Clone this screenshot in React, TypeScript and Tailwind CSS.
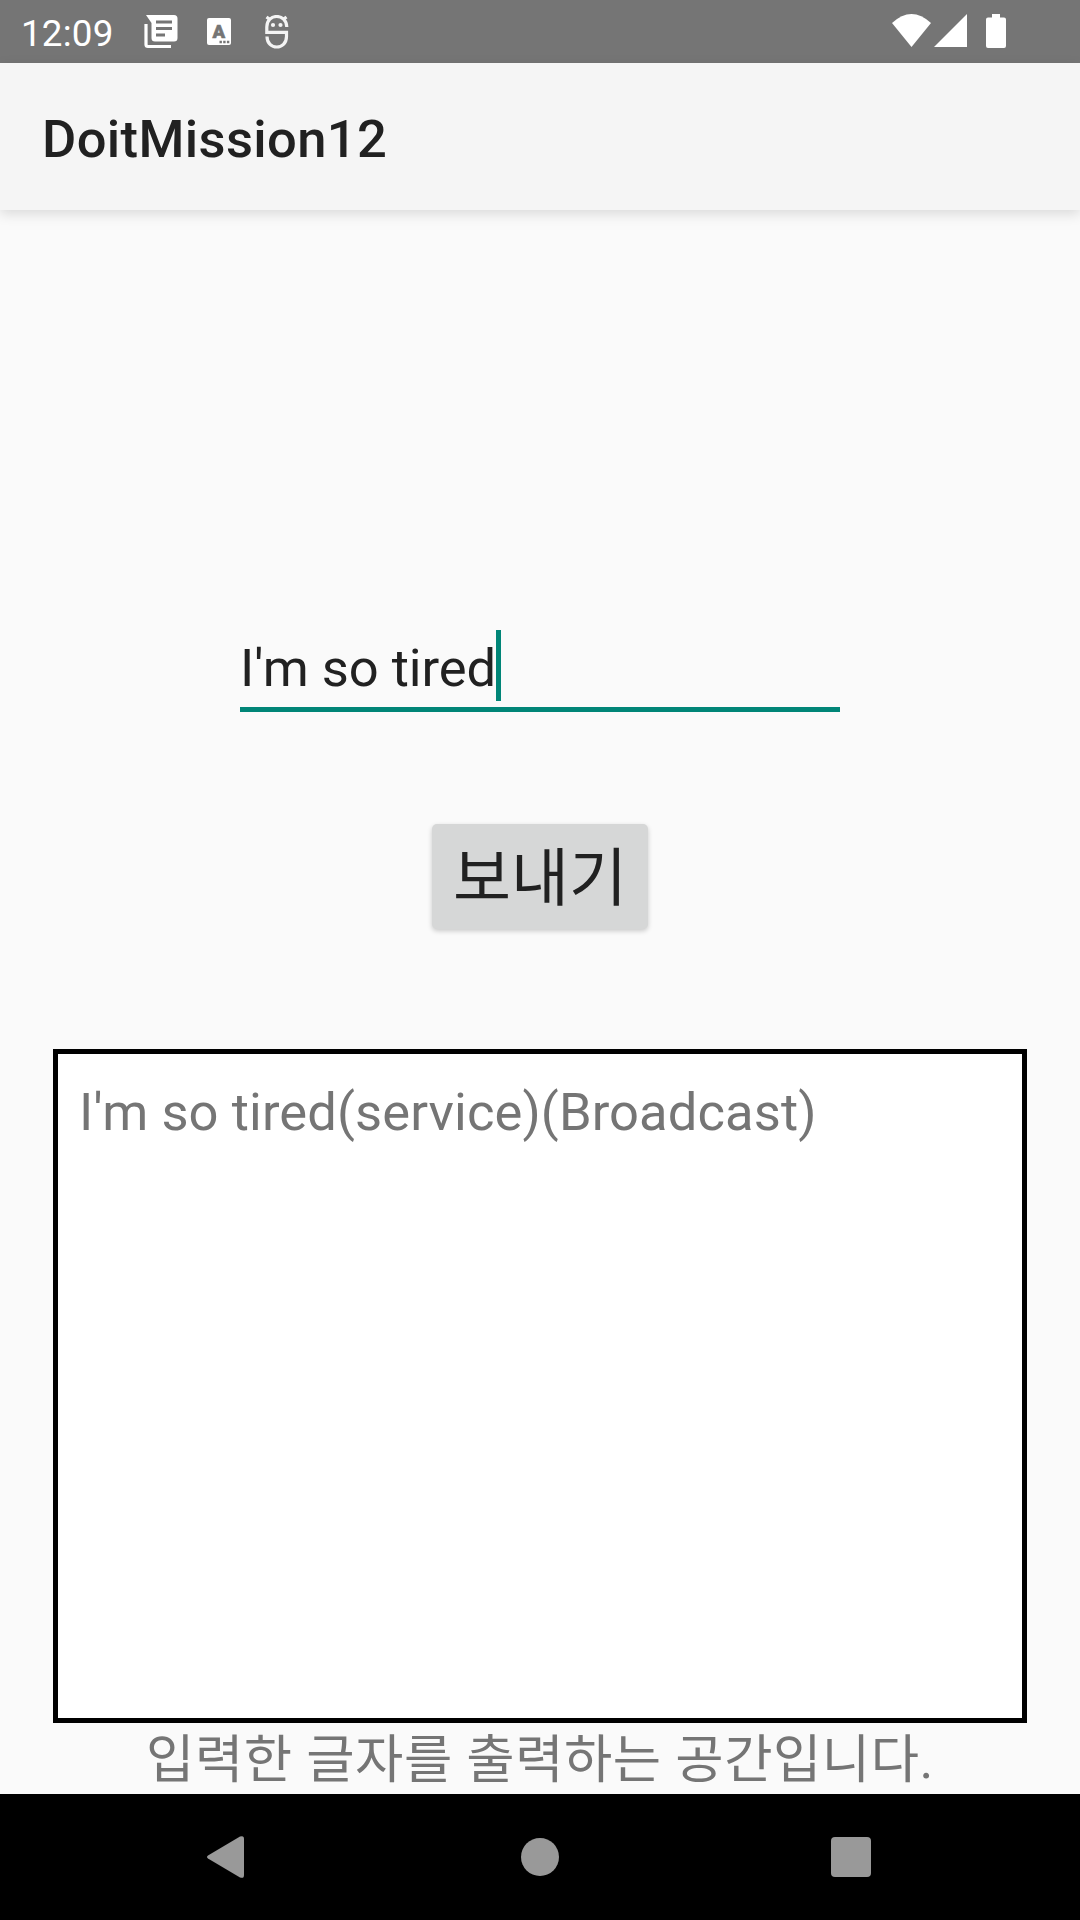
import { useState } from 'react';

function NewsIcon() {
  return (
    <svg width="34" height="34" viewBox="0 0 34 34" fill="none">
      <path d="M2 9V29.500Q2 31.500 4 31.500H27" stroke="#fff" strokeWidth="3.200" />
      <path
        d="M2 0H30Q33.500 0 33.500 3.500V23Q33.500 26.500 30 26.500H11Q7.500 26.500 7.500 23V8Z"
        fill="#fff"
      />
      <path d="M12 7H28M12 13.500H28M12 20H21" stroke="#757575" strokeWidth="2.800" />
    </svg>
  );
}

function KeyboardIcon() {
  return (
    <svg width="24" height="27" viewBox="0 0 24 27">
      <rect width="24" height="27" rx="2" fill="#fff" />
      <text
        x="11.7"
        y="19.5"
        textAnchor="middle"
        fontFamily="Roboto"
        fontWeight="900"
        fontSize="18.5"
        fill="#757575"
        stroke="#757575"
        strokeWidth="0.6"
      >
        A
      </text>
      <path d="M12.500 22.800h2.400v2.400h-2.400zM16.200 22.800h2.400v2.400h-2.400zM19.900 22.800h2.400v2.400h-2.400z" fill="#757575" />
    </svg>
  );
}

function BugDroidIcon() {
  return (
    <svg width="24" height="34" viewBox="0 0 24 34" fill="none" stroke="#f4f4f4" strokeWidth="3.200">
      <path d="M1.500 2L5 4.500M21.500 2L18 4.500" />
      <path d="M21.800 12C21.500 -2 1.800 -2 1.800 12V17.300H21.500V21.500C21.500 35.500 2 35.500 2 21.500" />
      <circle cx="8" cy="10" r="2.1" fill="#f4f4f4" stroke="none" />
      <circle cx="15.5" cy="10" r="2.1" fill="#f4f4f4" stroke="none" />
    </svg>
  );
}

function StatusBar() {
  return (
    <div className="flex h-[63px] items-start bg-[#757575] text-white">
      <div className="ml-[21px] mt-[12px] w-[123px] text-[36.75px] leading-[43px] tracking-[0.2px]">12:09</div>
      <div className="mt-[15px]">
        <NewsIcon />
      </div>
      <div className="ml-[29px] mt-[18px]">
        <KeyboardIcon />
      </div>
      <div className="ml-[34px] mt-[15px]">
        <BugDroidIcon />
      </div>
      <div className="ml-auto mr-[74px] mt-[14px] flex">
        <svg width="39" height="33" viewBox="0 0 39 33">
          <path d="M0 9Q19.500 -9 39 9L19.500 33Z" fill="#fff" />
        </svg>
        <svg className="ml-[3px]" width="33" height="33" viewBox="0 0 33 33">
          <path d="M33 0V33H0Z" fill="#fff" />
        </svg>
        <svg className="ml-[19px]" width="20" height="34" viewBox="0 0 20 34">
          <path d="M6 0H14V3.500H18Q20 3.500 20 5.500V32Q20 34 18 34H2Q0 34 0 32V5.500Q0 3.500 2 3.500H6Z" fill="#fff" />
        </svg>
      </div>
    </div>
  );
}

function NavigationBar() {
  return (
    <div className="flex h-[126px] items-center bg-black">
      <svg className="ml-[207px]" width="37" height="42" viewBox="0 0 37 42">
        <path d="M1 19.500L33 .6Q37 -1 37 3V39Q37 43 33 41.400L1 22.500Q-1 21 1 19.500Z" fill="#999" />
      </svg>
      <div className="ml-[277px] size-[38px] rounded-full bg-[#999]" />
      <div className="ml-[272px] size-[40px] rounded-[4px] bg-[#999]" />
    </div>
  );
}

export default function App() {
  const [message, setMessage] = useState("I'm so tired");
  const [output, setOutput] = useState("I'm so tired(service)(Broadcast)");

  return (
    <div className="flex h-[1920px] w-[1080px] flex-col bg-[#fafafa] font-[Roboto,'Noto_Sans_CJK_KR',sans-serif] text-[52.5px] text-[#212121]">
      <StatusBar />

      {/* App bar */}
      <div className="z-10 flex h-[147px] items-center bg-[#f5f5f5] pl-[42px] pt-[5px] font-medium tracking-[0.38px] shadow-[0_4px_12px_rgba(0,0,0,0.13)]">
        <h1>DoitMission12</h1>
      </div>

      <div className="flex flex-1 flex-col items-center">
        {/* Message field */}
        <label className="mt-[420px] flex h-[82px] w-[600px] border-b-[5px] border-[#008577]">
          <input
            className="field-sizing-content h-[75px] bg-transparent leading-[62px] tracking-[-0.05px] outline-none"
            value={message}
            onChange={(e) => setMessage(e.target.value)}
          />
          <span className="h-[71px] w-[5px] bg-[#008577]" />
        </label>

        <button
          onClick={() => setOutput(`${message}(service)(Broadcast)`)}
          className="mt-[112px] h-[105px] w-[216px] rounded-[5px] bg-[#d6d7d7] pt-[5px] text-[63px] leading-[100px] shadow-[0_2px_5px_rgba(0,0,0,0.2)]"
        >
          보내기
        </button>

        {/* Output */}
        <div className="mt-[120px] h-[674px] w-[974px] border-[5px] border-black bg-white pl-[21px] pt-[27px] leading-[62px] tracking-[0.1px] text-[#757575]">
          {output}
        </div>
        <p className="h-[71px] pt-[2px] leading-[71px] tracking-[0.55px] text-[#757575]">
          입력한 글자를 출력하는 공간입니다.
        </p>
      </div>

      <NavigationBar />
    </div>
  );
}
